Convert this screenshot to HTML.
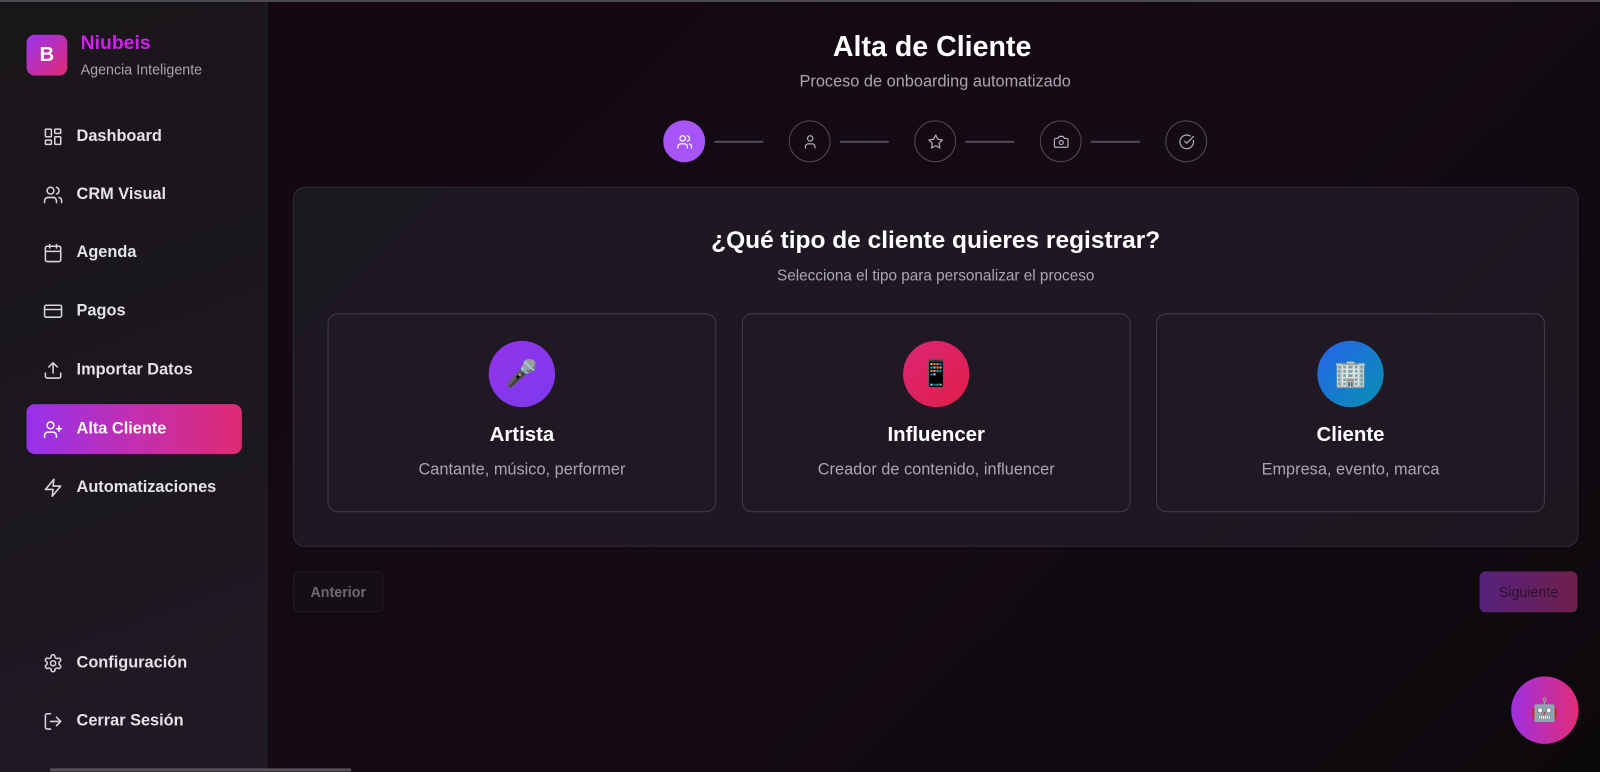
<!DOCTYPE html>
<html><head><meta charset="utf-8"><style>
*{margin:0;padding:0;box-sizing:border-box}
html,body{width:1600px;height:772px;overflow:hidden;background:#0e0a0e}
body{font-family:"Liberation Sans",sans-serif;position:relative}
#w{position:absolute;left:0;top:0;width:1568px;height:757px;transform:scale(1.0204);transform-origin:0 0}
.top{position:absolute;left:0;top:0;width:1568px;height:2px;background:#4a4a50}
.side{position:absolute;left:0;top:2px;width:262px;height:770px;background:linear-gradient(160deg,#19161a 0%,#1b171d 50%,#211a26 100%);border-right:1px solid #2a2630}
.logo{position:absolute;left:26px;top:32px;width:40px;height:40px;border-radius:8px;background:linear-gradient(135deg,#9b34ef,#e02a72);color:#fff;font-weight:bold;font-size:20px;text-align:center;line-height:40px}
.bn{position:absolute;left:79px;top:30px;color:#d21ff0;font-weight:bold;font-size:19px}
.bs{position:absolute;left:79px;top:58px;color:#a8a4ac;font-size:14px}
.nav{position:absolute;left:26px;width:211px;height:49px;display:flex;align-items:center;padding-left:16px;color:#e4e2e8;font-size:16px;font-weight:bold;border-radius:8px}
.nav svg{width:20px;height:20px;margin-right:13px;fill:none;stroke:#d8d6dc;stroke-width:1.8;stroke-linecap:round;stroke-linejoin:round}
.nav.act{background:linear-gradient(90deg,#9532ea,#c22fb0 50%,#df2b74);color:#fff}
.nav.act svg{stroke:#fff}
.main{position:absolute;left:263px;top:2px;width:1305px;height:770px;background:linear-gradient(135deg,#140812,#150b15 50%,#0c090c)}
h1{position:absolute;left:0;width:1307px;top:28px;text-align:center;color:#fff;font-size:28px;font-weight:bold;margin-left:-3px}
.sub{position:absolute;width:1307px;top:70px;text-align:center;color:#a8a6b0;font-size:16px}
.st{position:absolute;top:116px;width:41px;height:41px;border-radius:50%;border:1.5px solid #4f4b58;display:flex;align-items:center;justify-content:center}
.st svg{width:16px;height:16px;fill:none;stroke:#b0adb8;stroke-width:1.8;stroke-linecap:round;stroke-linejoin:round}
.st.a{background:#a855f7;border-color:#a855f7}.st.a svg{stroke:#fff}
.ln{position:absolute;top:136px;width:48px;height:1.5px;background:#4f4b58}
.card{position:absolute;left:24px;top:181px;width:1260px;height:353px;border:1px solid #2f2b36;border-radius:12px;background:linear-gradient(135deg,#1c1820,#1f1824 50%,#1c171f)}
.q{position:absolute;width:100%;top:38px;text-align:center;color:#fff;font-size:24px;font-weight:bold}
.qs{position:absolute;width:100%;top:78px;text-align:center;color:#a8a6b0;font-size:15px}
.opt{position:absolute;top:123px;width:381px;height:195px;border:1.5px solid #3b3f4d;border-radius:10px;background:#201822;text-align:center}
.ic{width:65px;height:65px;border-radius:50%;margin:26px auto 0;display:flex;align-items:center;justify-content:center;font-size:26px;font-family:"Noto Color Emoji","DejaVu Sans",sans-serif}
.ot{color:#fff;font-weight:bold;font-size:20px;margin-top:16px}
.od{color:#a8a6b0;font-size:16px;margin-top:14px}
.btn{position:absolute;top:558px;height:40px;border-radius:6px;font-size:14px;font-weight:bold;display:flex;align-items:center;justify-content:center}
</style></head><body>
<div id="w">
<div class="top"></div>
<div class="side">
<div class="logo">B</div><div class="bn">Niubeis</div><div class="bs">Agencia Inteligente</div>
<div class="nav" style="top:107px"><svg viewBox="0 0 24 24"><rect x="3" y="3" width="7" height="9" rx="1"/><rect x="14" y="3" width="7" height="5" rx="1"/><rect x="14" y="12" width="7" height="9" rx="1"/><rect x="3" y="16" width="7" height="5" rx="1"/></svg>Dashboard</div>
<div class="nav" style="top:164px"><svg viewBox="0 0 24 24"><path d="M16 21v-2a4 4 0 0 0-4-4H6a4 4 0 0 0-4 4v2"/><circle cx="9" cy="7" r="4"/><path d="M22 21v-2a4 4 0 0 0-3-3.87M16 3.13a4 4 0 0 1 0 7.75"/></svg>CRM Visual</div>
<div class="nav" style="top:221px"><svg viewBox="0 0 24 24"><rect x="3" y="4" width="18" height="18" rx="2"/><path d="M16 2v4M8 2v4M3 10h18"/></svg>Agenda</div>
<div class="nav" style="top:278px"><svg viewBox="0 0 24 24"><rect x="2" y="5" width="20" height="14" rx="2"/><path d="M2 10h20"/></svg>Pagos</div>
<div class="nav" style="top:336px"><svg viewBox="0 0 24 24"><path d="M21 15v4a2 2 0 0 1-2 2H5a2 2 0 0 1-2-2v-4M17 8l-5-5-5 5M12 3v12"/></svg>Importar Datos</div>
<div class="nav act" style="top:394px"><svg viewBox="0 0 24 24"><path d="M16 21v-2a4 4 0 0 0-4-4H6a4 4 0 0 0-4 4v2"/><circle cx="9" cy="7" r="4"/><path d="M19 8v6M22 11h-6"/></svg>Alta Cliente</div>
<div class="nav" style="top:451px"><svg viewBox="0 0 24 24"><path d="M13 2L3 14h9l-1 8 10-12h-9l1-8z"/></svg>Automatizaciones</div>
<div class="nav" style="top:623px"><svg viewBox="0 0 24 24"><circle cx="12" cy="12" r="3"/><path d="M12.22 2h-.44a2 2 0 0 0-2 2v.18a2 2 0 0 1-1 1.73l-.43.25a2 2 0 0 1-2 0l-.15-.08a2 2 0 0 0-2.730.73l-.22.38a2 2 0 0 0 .73 2.73l.15.1a2 2 0 0 1 1 1.72v.51a2 2 0 0 1-1 1.740l-.15.09a2 2 0 0 0-.73 2.73l.22.38a2 2 0 0 0 2.73.73l.15-.08a2 2 0 0 1 2 0l.43.25a2 2 0 0 1 1 1.73V20a2 2 0 0 0 2 2h.44a2 2 0 0 0 2-2v-.18a2 2 0 0 1 1-1.73l.43-.25a2 2 0 0 1 2 0l.15.08a2 2 0 0 0 2.73-.73l.22-.39a2 2 0 0 0-.73-2.73l-.15-.08a2 2 0 0 1-1-1.74v-.5a2 2 0 0 1 1-1.74l.15-.09a2 2 0 0 0 .73-2.73l-.22-.38a2 2 0 0 0-2.73-.73l-.15.08a2 2 0 0 1-2 0l-.43-.25a2 2 0 0 1-1-1.73V4a2 2 0 0 0-2-2z"/></svg>Configuración</div>
<div class="nav" style="top:680px"><svg viewBox="0 0 24 24"><path d="M9 21H5a2 2 0 0 1-2-2V5a2 2 0 0 1 2-2h4M16 17l5-5-5-5M21 12H9"/></svg>Cerrar Sesión</div>
</div>
<div class="main">
<h1>Alta de Cliente</h1>
<div class="sub">Proceso de onboarding automatizado</div>
<div class="st a" style="left:387px"><svg viewBox="0 0 24 24"><path d="M16 21v-2a4 4 0 0 0-4-4H6a4 4 0 0 0-4 4v2"/><circle cx="9" cy="7" r="4"/><path d="M22 21v-2a4 4 0 0 0-3-3.87M16 3.13a4 4 0 0 1 0 7.75"/></svg></div>
<div class="ln" style="left:437px"></div>
<div class="st" style="left:510px"><svg viewBox="0 0 24 24"><path d="M19 21v-2a4 4 0 0 0-4-4H9a4 4 0 0 0-4 4v2"/><circle cx="12" cy="7" r="4"/></svg></div>
<div class="ln" style="left:560px"></div>
<div class="st" style="left:633px"><svg viewBox="0 0 24 24"><path d="M12 2l3.09 6.26L22 9.27l-5 4.87 1.18 6.88L12 17.77l-6.18 3.25L7 14.14 2 9.27l6.91-1.01L12 2z"/></svg></div>
<div class="ln" style="left:683px"></div>
<div class="st" style="left:756px"><svg viewBox="0 0 24 24"><path d="M14.5 4h-5L7 7H4a2 2 0 0 0-2 2v9a2 2 0 0 0 2 2h16a2 2 0 0 0 2-2V9a2 2 0 0 0-2-2h-3l-2.5-3z"/><circle cx="12" cy="13" r="3"/></svg></div>
<div class="ln" style="left:806px"></div>
<div class="st" style="left:879px"><svg viewBox="0 0 24 24"><path d="M21.8 10A10 10 0 1 1 17 3.34"/><path d="M9 11l3 3L22 4"/></svg></div>
<div class="card">
<div class="q">¿Qué tipo de cliente quieres registrar?</div>
<div class="qs">Selecciona el tipo para personalizar el proceso</div>
<div class="opt" style="left:33px"><div class="ic" style="background:linear-gradient(135deg,#9333ea,#7c3aed)">🎤</div><div class="ot">Artista</div><div class="od">Cantante, músico, performer</div></div>
<div class="opt" style="left:439px"><div class="ic" style="background:linear-gradient(135deg,#db2777,#e11d48)">📱</div><div class="ot">Influencer</div><div class="od">Creador de contenido, influencer</div></div>
<div class="opt" style="left:845px"><div class="ic" style="background:linear-gradient(135deg,#2563eb,#0891b2)">🏢</div><div class="ot">Cliente</div><div class="od">Empresa, evento, marca</div></div>
</div>
<div class="btn" style="left:24px;width:89px;background:#140f14;border:1px solid #231e24;color:#6e6a72">Anterior</div>
<div class="btn" style="left:1187px;width:96px;background:linear-gradient(90deg,#56217d,#6f1f4a);color:#2a1030;font-weight:normal">Siguiente</div>
<div style="position:absolute;left:1218px;top:661px;width:66px;height:66px;border-radius:50%;background:linear-gradient(90deg,#a02fe0,#e22c78);display:flex;align-items:center;justify-content:center;font-size:22px;font-family:'Noto Color Emoji','DejaVu Sans',sans-serif">🤖</div>
</div>
<div style="position:absolute;left:49px;top:753px;width:295px;height:3px;background:#55525a"></div>
</div>
</body></html>
